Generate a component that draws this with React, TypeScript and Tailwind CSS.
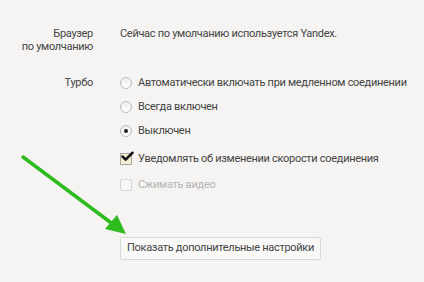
import { Check } from 'lucide-react'

const font = { fontFamily: 'Roboto, "Open Sans", sans-serif' }

function Radio({ checked, label }: { checked?: boolean; label: string }) {
  return (
    <label className="flex items-center gap-[6px] h-[24px]">
      <span className="w-[12px] h-[12px] rounded-full border border-[#b9b9b9] bg-gradient-to-b from-[#eeeeee] to-white flex items-center justify-center shrink-0">
        {checked && <span className="w-[4px] h-[4px] rounded-full bg-[#222]" />}
      </span>
      <span className="whitespace-nowrap">{label}</span>
    </label>
  )
}

export default function App() {
  return (
    <div className="relative w-[424px] h-[282px] bg-[#f5f4f2] text-[11px] tracking-[-0.3px] text-[#444] overflow-hidden" style={font}>
      <div className="pt-[27px] pl-[10px]">
        {/* default browser */}
        <div className="flex">
          <div className="w-[83px] shrink-0 text-right leading-[13px] whitespace-nowrap">
            Браузер
            <br />
            по умолчанию
          </div>
          <div className="ml-[27px] leading-[13px] whitespace-nowrap">Сейчас по умолчанию используется Yandex.</div>
        </div>

        {/* turbo */}
        <div className="flex mt-[18px]">
          <div className="w-[83px] shrink-0 text-right leading-[24px]">Турбо</div>
          <div className="ml-[27px] flex flex-col">
            <Radio label="Автоматически включать при медленном соединении" />
            <Radio label="Всегда включен" />
            <Radio checked label="Выключен" />
            <label className="flex items-center gap-[6px] h-[28px] mt-[2px]">
              <span className="relative w-[12px] h-[12px] border border-[#a8a8a8] bg-[#f6efcf] shrink-0">
                <Check className="absolute -top-[5px] -left-[1px] w-[15px] h-[15px] text-[#111]" strokeWidth={4} />
              </span>
              <span className="whitespace-nowrap">Уведомлять об изменении скорости соединения</span>
            </label>
            <label className="flex items-center gap-[6px] h-[24px] text-[#b5b5b5]">
              <span className="w-[12px] h-[12px] rounded-[2px] border border-[#d6d6d6] bg-[#f7f7f7] shrink-0" />
              <span>Сжимать видео</span>
            </label>
            <button className="mt-[40px] self-start h-[23px] px-[6px] rounded-[2px] border border-[#d8d8d8] bg-[#f8f8f7] text-[#444] text-[11px] tracking-[-0.3px] whitespace-nowrap" style={font}>
              Показать дополнительные настройки
            </button>
          </div>
        </div>
      </div>

      {/* green annotation arrow */}
      <svg className="absolute left-0 top-0" width="424" height="282" viewBox="0 0 424 282">
        <line x1="23" y1="157" x2="114" y2="225" stroke="#2dbb1e" strokeWidth="3.5" strokeLinecap="round" />
        <polygon points="126,234 105,229 117,215" fill="#2dbb1e" />
      </svg>
    </div>
  )
}
